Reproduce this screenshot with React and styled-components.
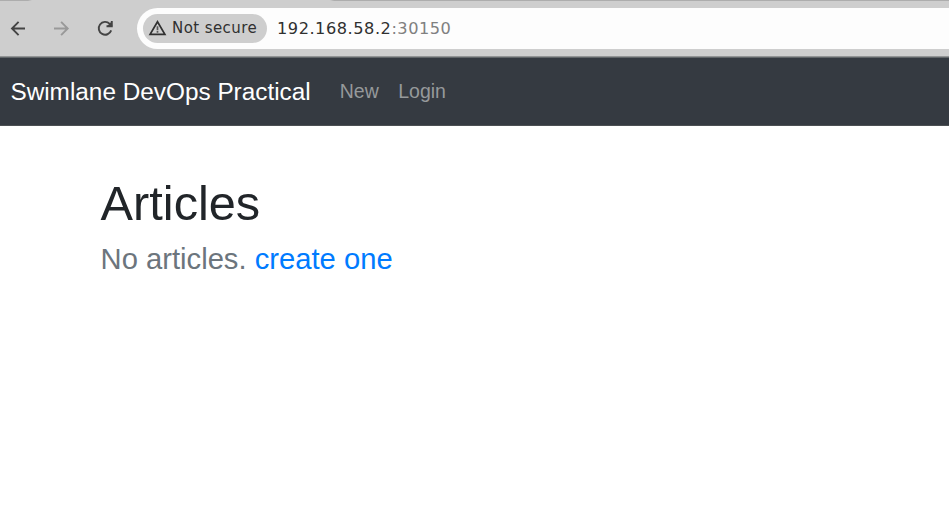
import React from "react";
import styled, { createGlobalStyle } from "styled-components";

const Global = createGlobalStyle`
  * { box-sizing: border-box; }
  body { margin: 0; background: #fff; font-family: "Liberation Sans", Arial, sans-serif; overflow: hidden; }
  a { text-decoration: none; }
`;

const Page = styled.div`
  display: flex;
  flex-direction: column;
  height: 520px;
  white-space: nowrap;
`;

const TabStrip = styled.div`
  height: 1px;
  flex: none;
  background: linear-gradient(90deg, #adadad 28px, #cecece 32px, #cecece 330px, #adadad 334px);
`;

const Toolbar = styled.header`
  display: flex;
  align-items: center;
  flex: none;
  height: 56px;
  padding: 0 0 1px 7px;
  background: #cecece;
  border-bottom: 1px solid #929495;
  font-family: "DejaVu Sans", sans-serif;
`;

const ToolButton = styled.button`
  display: flex;
  padding: 0;
  margin-right: 22px;
  border: 0;
  background: none;
  color: ${(p) => (p.$dim ? "#999" : "#444")};
`;

const AddressBar = styled.div`
  display: flex;
  align-items: center;
  flex: 1;
  height: 41px;
  margin-left: -2px;
  padding-left: 6px;
  border-radius: 21px 0 0 21px;
  background: #fdfdfd;
`;

const SecurityChip = styled.span`
  display: flex;
  align-items: center;
  width: 124px;
  height: 29px;
  padding-left: 5px;
  gap: 5px;
  border-radius: 15px;
  background: #cecece;
  color: #303030;
  font-size: 15px;
  letter-spacing: 0.42px;
  line-height: 18px;
`;

const Url = styled.span`
  margin-left: 10px;
  padding-top: 1px;
  color: #303030;
  font-size: 16.2px;
  letter-spacing: 0.52px;
  line-height: 20px;
`;

const Port = styled.span`
  color: #808080;
`;

const Navbar = styled.nav`
  display: flex;
  align-items: center;
  flex: none;
  height: 69px;
  padding-left: 10.4px;
  background: #353a41;
  border-top: 1px solid #62676a;
  border-bottom: 1px solid #4c5053;
`;

const Brand = styled.a`
  color: #fff;
  font-size: 24.35px;
  line-height: 36px;
  margin-right: 29px;
`;

const NavLink = styled.a`
  color: #96999b;
  font-size: 19.5px;
  line-height: 30px;
  margin-right: 19.5px;
  padding-bottom: 2px;
`;

const Main = styled.main`
  padding: 48px 0 0 100.6px;
`;

const Title = styled.h1`
  margin: 0 0 10px;
  color: #212529;
  font-size: 48.7px;
  font-weight: 400;
  line-height: 58px;
`;

const Empty = styled.p`
  margin: 0;
  color: #6c757d;
  font-size: 29.2px;
  line-height: 35px;
`;

const CreateLink = styled.a`
  color: #007bff;
`;

const Icon = ({ size = 22, children }) => (
  <svg width={size} height={size} viewBox="0 0 22 22" fill="none" stroke="currentColor" strokeWidth="1.9">
    {children}
  </svg>
);

export default function App() {
  return (
    <Page>
      <Global />
      <TabStrip />
      <Toolbar>
        <ToolButton aria-label="Back">
          <Icon><path d="M18 11.5H5M11.6 4.9 5 11.5l6.6 6.6" /></Icon>
        </ToolButton>
        <ToolButton aria-label="Forward" $dim>
          <Icon><path d="M3 11.5h13M10.1 4.9l6.6 6.6-6.6 6.6" /></Icon>
        </ToolButton>
        <ToolButton aria-label="Reload">
          <Icon>
            <path d="M16.2 13.4a6.4 6.4 0 1 1-1.5-6.6L16.8 9" />
            <path d="M16.8 4v5.2h-5.3" />
            <path d="M16.6 4.6v4.4h-4.4Z" fill="currentColor" stroke="none" />
          </Icon>
        </ToolButton>
        <AddressBar>
          <SecurityChip>
            <svg width="19" height="18" viewBox="0 0 19 18" fill="none" stroke="currentColor" strokeWidth="1.7">
              <path d="M9.5 2.7 2.1 15.4h14.8Z" />
              <path d="M9.5 7.2v4M9.5 12.1v1.7" strokeOpacity=".75" />
            </svg>
            Not secure
          </SecurityChip>
          <Url>192.168.58.2<Port>:30150</Port></Url>
        </AddressBar>
      </Toolbar>
      <Navbar>
        <Brand href="#">Swimlane DevOps Practical</Brand>
        <NavLink href="#">New</NavLink>
        <NavLink href="#">Login</NavLink>
      </Navbar>
      <Main>
        <Title>Articles</Title>
        <Empty>No articles. <CreateLink href="#">create one</CreateLink></Empty>
      </Main>
    </Page>
  );
}
